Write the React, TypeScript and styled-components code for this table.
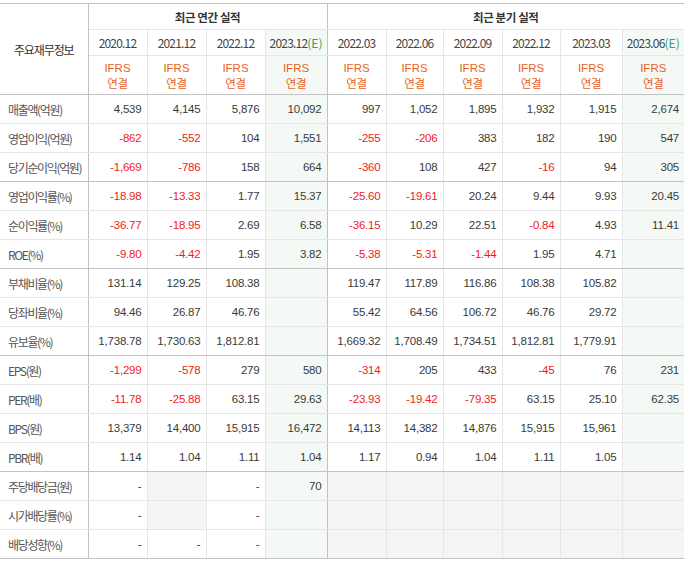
import React from 'react';
import styled, { createGlobalStyle } from 'styled-components';

const GlobalStyle = createGlobalStyle`
  html, body {
    margin: 0;
    padding: 0;
    background: #fff;
  }
  body {
    padding-top: 3px;
    font-family: "Liberation Sans", "Noto Sans CJK KR", sans-serif;
  }
`;

const DARK = '#c3c3c3';
const LIGHT = '#e6e6e6';
const EST_BG = '#f4f9f5';
const EMPTY_BG = '#f5f5f5';

const annual = ['2020.12', '2021.12', '2022.12', '2023.12'];
const quarter = ['2022.03', '2022.06', '2022.09', '2022.12', '2023.03', '2023.06'];
const colWidths = [88, 59, 59, 59, 62, 59, 57, 59, 58, 62, 62];
const estCols = [3, 9];

// null = 회색 빈칸, '' = 일반 빈칸
type Cell = string | null;

interface Row {
  label: string;
  values: Cell[];
}

const G = [null, null, null, null, null, null];

const rows: Row[] = [
  { label: '매출액(억원)', values: ['4,539', '4,145', '5,876', '10,092', '997', '1,052', '1,895', '1,932', '1,915', '2,674'] },
  { label: '영업이익(억원)', values: ['-862', '-552', '104', '1,551', '-255', '-206', '383', '182', '190', '547'] },
  { label: '당기순이익(억원)', values: ['-1,669', '-786', '158', '664', '-360', '108', '427', '-16', '94', '305'] },
  { label: '영업이익률(%)', values: ['-18.98', '-13.33', '1.77', '15.37', '-25.60', '-19.61', '20.24', '9.44', '9.93', '20.45'] },
  { label: '순이익률(%)', values: ['-36.77', '-18.95', '2.69', '6.58', '-36.15', '10.29', '22.51', '-0.84', '4.93', '11.41'] },
  { label: 'ROE(%)', values: ['-9.80', '-4.42', '1.95', '3.82', '-5.38', '-5.31', '-1.44', '1.95', '4.71', ''] },
  { label: '부채비율(%)', values: ['131.14', '129.25', '108.38', '', '119.47', '117.89', '116.86', '108.38', '105.82', ''] },
  { label: '당좌비율(%)', values: ['94.46', '26.87', '46.76', '', '55.42', '64.56', '106.72', '46.76', '29.72', ''] },
  { label: '유보율(%)', values: ['1,738.78', '1,730.63', '1,812.81', '', '1,669.32', '1,708.49', '1,734.51', '1,812.81', '1,779.91', ''] },
  { label: 'EPS(원)', values: ['-1,299', '-578', '279', '580', '-314', '205', '433', '-45', '76', '231'] },
  { label: 'PER(배)', values: ['-11.78', '-25.88', '63.15', '29.63', '-23.93', '-19.42', '-79.35', '63.15', '25.10', '62.35'] },
  { label: 'BPS(원)', values: ['13,379', '14,400', '15,915', '16,472', '14,113', '14,382', '14,876', '15,915', '15,961', ''] },
  { label: 'PBR(배)', values: ['1.14', '1.04', '1.11', '1.04', '1.17', '0.94', '1.04', '1.11', '1.05', ''] },
  { label: '주당배당금(원)', values: ['-', null, '-', '70', ...G] },
  { label: '시가배당률(%)', values: ['-', null, '-', '', ...G] },
  { label: '배당성향(%)', values: ['-', '-', '-', '', ...G] },
];

const groupEnds = [2, 5, 8, 12, 15];

const Table = styled.table`
  width: 684px;
  table-layout: fixed;
  border-collapse: collapse;
  border-top: 1px solid ${DARK};
  color: #333;
  font-size: 12px;
`;

const HeadCell = styled.th<{ $est?: boolean; $groupStart?: boolean }>`
  font-weight: normal;
  text-align: center;
  padding: 0;
  border-bottom: 1px solid ${LIGHT};
  border-left: 1px solid ${(p) => (p.$groupStart ? DARK : LIGHT)};
  background: ${(p) => (p.$est ? EST_BG : '#fff')};
  font-family: "Noto Sans CJK KR", "Liberation Sans", sans-serif;
  font-size: 11px;
  letter-spacing: -0.6px;
  color: #444;
  &:first-child {
    border-left: none;
  }
`;

const GroupTitle = styled(HeadCell)`
  height: 25px;
  font-weight: bold;
  font-size: 11.5px;
  letter-spacing: -0.4px;
  color: #333;
`;

const CornerCell = styled(HeadCell)`
  border-bottom: 1px solid ${DARK};
  border-right: 1px solid ${DARK};
  font-size: 12px;
  letter-spacing: -1.1px;
  color: #333;
`;

const PeriodCell = styled(HeadCell)`
  height: 25px;
  font-size: 12px;
  letter-spacing: -0.8px;
`;

const Est = styled.span`
  color: #3f9a5d;
  letter-spacing: 0;
`;

const TypeCell = styled(HeadCell)`
  height: 38px;
  border-bottom: 1px solid ${DARK};
  color: #e8621e;
  line-height: 15px;
  font-size: 11.5px;
  letter-spacing: -0.3px;
`;

const Ifrs = styled.span`
  font-family: "Liberation Sans", sans-serif;
  font-size: 11.5px;
  letter-spacing: 0;
`;

const BodyRow = styled.tr<{ $groupEnd?: boolean }>`
  & > td,
  & > th {
    border-bottom: 1px solid ${(p) => (p.$groupEnd ? DARK : LIGHT)};
  }
`;

const Label = styled.th`
  height: 28px;
  padding: 0 0 0 8px;
  text-align: left;
  font-weight: normal;
  font-family: "Noto Sans CJK KR", "Liberation Sans", sans-serif;
  font-size: 12px;
  letter-spacing: -1.35px;
  color: #555;
  border-right: 1px solid ${DARK};
  white-space: nowrap;
  overflow: hidden;
`;

const Value = styled.td<{ $est?: boolean; $empty?: boolean; $neg?: boolean; $groupStart?: boolean }>`
  height: 28px;
  padding: 0 5px 0 0;
  text-align: right;
  white-space: nowrap;
  font-size: 11.5px;
  letter-spacing: -0.2px;
  color: ${(p) => (p.$neg ? '#f21b1b' : '#3a3a3a')};
  background: ${(p) => (p.$empty ? EMPTY_BG : p.$est ? EST_BG : '#fff')};
  border-left: 1px solid ${(p) => (p.$groupStart ? DARK : LIGHT)};
`;

const App: React.FC = () => {
  const periods = [...annual, ...quarter];
  return (
    <>
      <GlobalStyle />
      <Table>
        <colgroup>
          {colWidths.map((w, i) => (
            <col key={i} style={{ width: w }} />
          ))}
        </colgroup>
        <thead>
          <tr>
            <CornerCell rowSpan={3}>주요재무정보</CornerCell>
            <GroupTitle colSpan={4}>최근 연간 실적</GroupTitle>
            <GroupTitle colSpan={6} $groupStart>
              최근 분기 실적
            </GroupTitle>
          </tr>
          <tr>
            {periods.map((p, i) => (
              <PeriodCell key={p} $est={estCols.includes(i)} $groupStart={i === 4}>
                {p}
                {estCols.includes(i) && <Est>(E)</Est>}
              </PeriodCell>
            ))}
          </tr>
          <tr>
            {periods.map((p, i) => (
              <TypeCell key={p} $est={estCols.includes(i)} $groupStart={i === 4}>
                <Ifrs>IFRS</Ifrs>
                <br />
                연결
              </TypeCell>
            ))}
          </tr>
        </thead>
        <tbody>
          {rows.map((r, ri) => (
            <BodyRow key={r.label} $groupEnd={groupEnds.includes(ri)}>
              <Label>{r.label}</Label>
              {r.values.map((v, i) => (
                <Value
                  key={i}
                  $est={estCols.includes(i)}
                  $empty={v === null}
                  $neg={!!v && v.startsWith('-') && v.length > 1}
                  $groupStart={i === 4}
                >
                  {v}
                </Value>
              ))}
            </BodyRow>
          ))}
        </tbody>
      </Table>
    </>
  );
};

export default App;
